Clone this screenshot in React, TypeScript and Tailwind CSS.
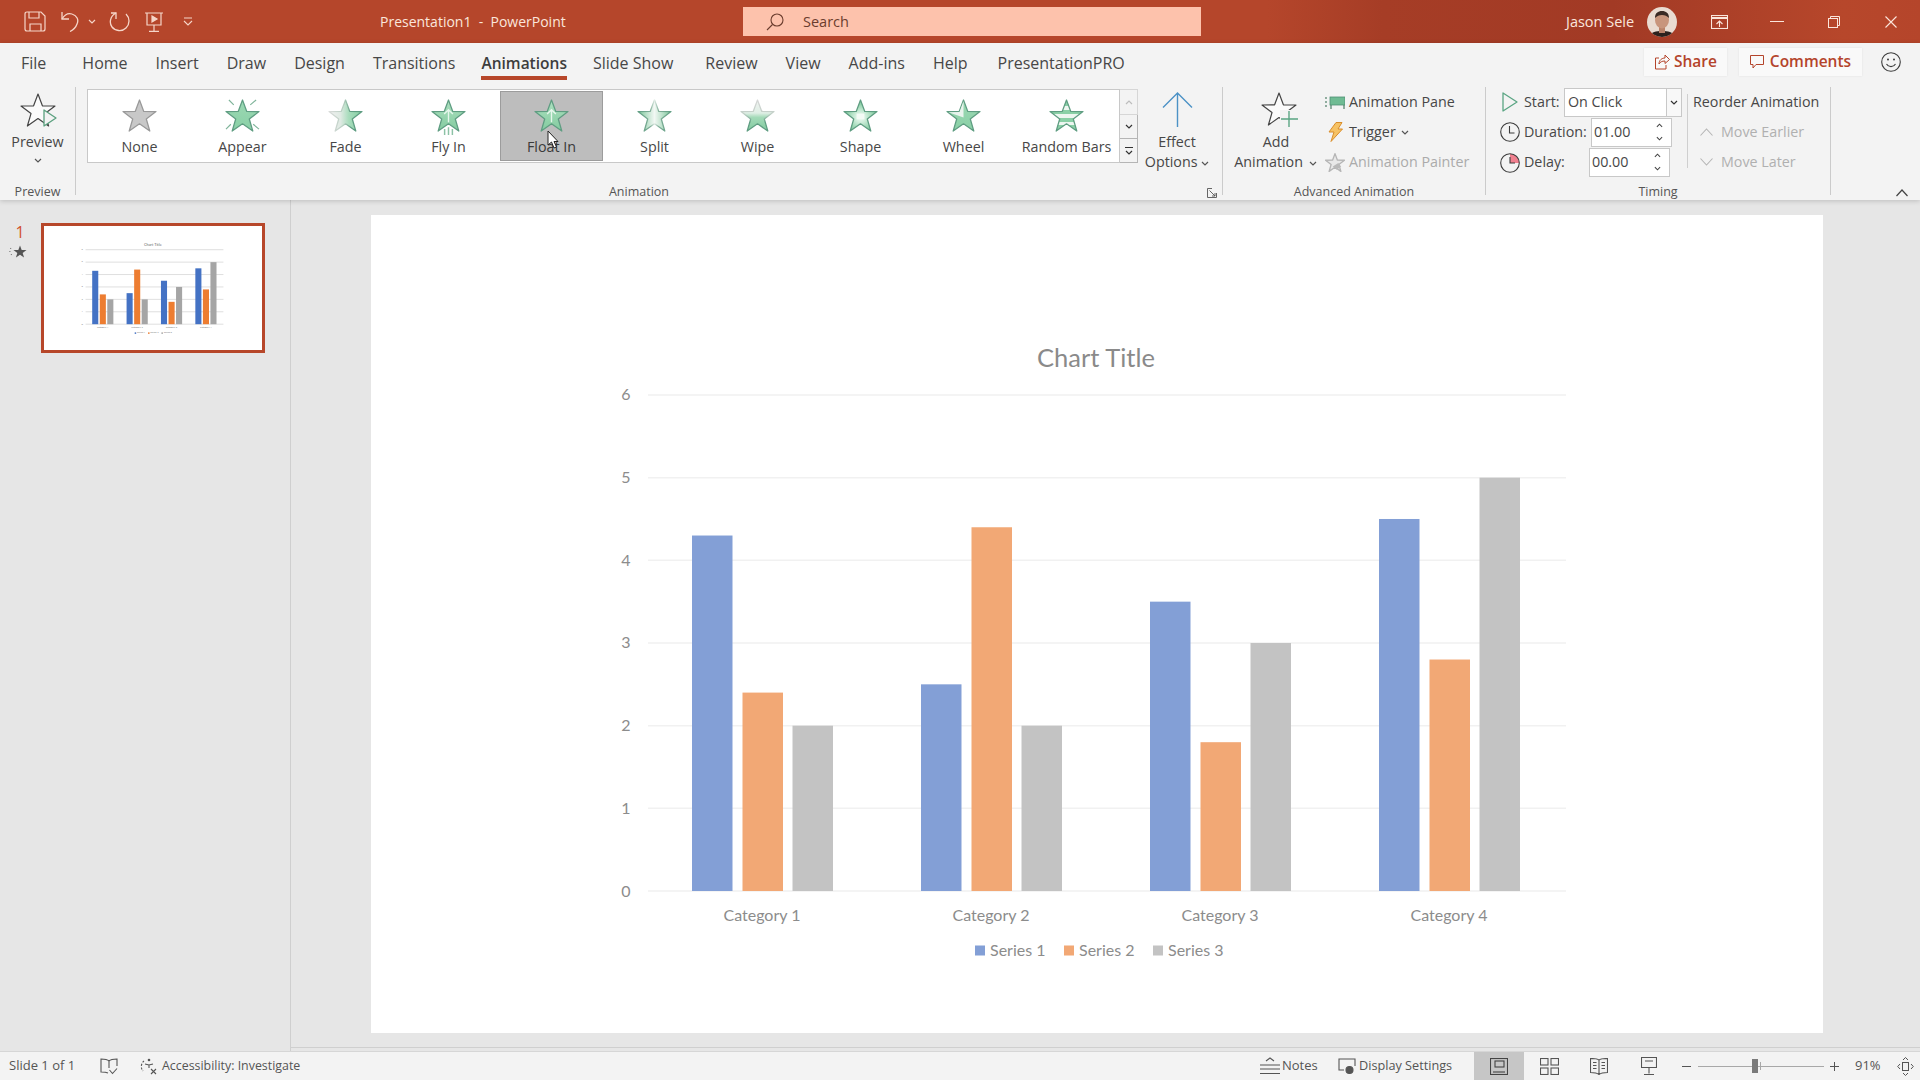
import type { ReactNode } from 'react';

const STAR = '18,1 22.4,12.8 35,13 25,20.6 28.6,33 18,25.6 7.4,33 11,20.6 1,13 13.6,12.8';

type Fx = 'none' | 'appear' | 'fade' | 'fly' | 'float' | 'split' | 'wipe' | 'shape' | 'wheel' | 'bars';

const effects: { label: string; fx: Fx }[] = [
  { label: 'None', fx: 'none' },
  { label: 'Appear', fx: 'appear' },
  { label: 'Fade', fx: 'fade' },
  { label: 'Fly In', fx: 'fly' },
  { label: 'Float In', fx: 'float' },
  { label: 'Split', fx: 'split' },
  { label: 'Wipe', fx: 'wipe' },
  { label: 'Shape', fx: 'shape' },
  { label: 'Wheel', fx: 'wheel' },
  { label: 'Random Bars', fx: 'bars' },
];

const tabs = ['Home', 'Insert', 'Draw', 'Design', 'Transitions', 'Animations', 'Slide Show', 'Review', 'View', 'Add-ins', 'Help', 'PresentationPRO'];

const series = [
  { name: 'Series 1', color: '#839fd6', thumb: '#4472c4', values: [4.3, 2.5, 3.5, 4.5], offset: 0 },
  { name: 'Series 2', color: '#f2a875', thumb: '#ed7d31', values: [2.4, 4.4, 1.8, 2.8], offset: 50.5 },
  { name: 'Series 3', color: '#c3c3c3', thumb: '#a5a5a5', values: [2, 2, 3, 5], offset: 100.5 },
];

function GalleryStar({ fx }: { fx: Fx }) {
  const id = `star-${fx}`;
  const stroke = fx === 'none' ? '#999999' : '#5f9d82';
  const fill = fx === 'none' ? '#c8c8c8' : `url(#${id})`;
  const hasEdge = fx === 'fade' || fx === 'split' || fx === 'wipe';
  return (
    <svg width="35" height="33" viewBox="0 0 36 34" className="overflow-visible">
      <defs>
        {(fx === 'appear' || fx === 'wheel') && (
          <linearGradient id={id} x1="0" y1="0" x2="0" y2="1">
            <stop offset="0" stopColor="#9bd8b3" />
            <stop offset="1" stopColor="#8ad0a6" />
          </linearGradient>
        )}
        {fx === 'fade' && (
          <linearGradient id={id} x1="0" y1="0" x2="1" y2="0">
            <stop offset="0" stopColor="#f0f0f0" />
            <stop offset="0.35" stopColor="#dfeae3" />
            <stop offset="0.6" stopColor="#a8dcbc" />
            <stop offset="1" stopColor="#84cea2" />
          </linearGradient>
        )}
        {(fx === 'fly' || fx === 'float') && (
          <linearGradient id={id} x1="0" y1="0" x2="0" y2="1">
            <stop offset="0" stopColor="#aee0c0" />
            <stop offset="1" stopColor="#82cb9f" />
          </linearGradient>
        )}
        {fx === 'split' && (
          <linearGradient id={id} x1="0" y1="0" x2="1" y2="0">
            <stop offset="0" stopColor="#7cc79a" />
            <stop offset="0.35" stopColor="#cfe9d9" />
            <stop offset="0.5" stopColor="#f2f8f4" />
            <stop offset="0.65" stopColor="#cfe9d9" />
            <stop offset="1" stopColor="#7cc79a" />
          </linearGradient>
        )}
        {fx === 'wipe' && (
          <linearGradient id={id} x1="0" y1="0" x2="0" y2="1">
            <stop offset="0" stopColor="#f0f4f1" />
            <stop offset="0.42" stopColor="#dfeee5" />
            <stop offset="0.56" stopColor="#a3dab8" />
            <stop offset="1" stopColor="#80ca9e" />
          </linearGradient>
        )}
        {fx === 'shape' && (
          <radialGradient id={id} cx="0.5" cy="0.55" r="0.5">
            <stop offset="0" stopColor="#f2faf5" />
            <stop offset="0.3" stopColor="#d3efde" />
            <stop offset="1" stopColor="#7ac99a" />
          </radialGradient>
        )}
        {fx === 'bars' && (
          <linearGradient id={id} x1="0" y1="0" x2="0" y2="1">
            <stop offset="0" stopColor="#8ad0a6" />
            <stop offset="0.2" stopColor="#8ad0a6" />
            <stop offset="0.2" stopColor="#edf6f0" />
            <stop offset="0.32" stopColor="#edf6f0" />
            <stop offset="0.32" stopColor="#8ad0a6" />
            <stop offset="0.46" stopColor="#8ad0a6" />
            <stop offset="0.46" stopColor="#edf6f0" />
            <stop offset="0.58" stopColor="#edf6f0" />
            <stop offset="0.58" stopColor="#8ad0a6" />
            <stop offset="0.72" stopColor="#8ad0a6" />
            <stop offset="0.72" stopColor="#edf6f0" />
            <stop offset="0.8" stopColor="#edf6f0" />
            <stop offset="0.8" stopColor="#8ad0a6" />
            <stop offset="1" stopColor="#8ad0a6" />
          </linearGradient>
        )}
        {hasEdge && (
          <linearGradient id={`edge-${fx}`} gradientUnits="userSpaceOnUse" x1={fx === 'wipe' ? 18 : 0} y1="0" x2={fx === 'wipe' ? 18 : 36} y2={fx === 'wipe' ? 34 : 0}>
            {fx === 'fade' && <stop offset="0" stopColor="#dcdcdc" />}
            {fx === 'fade' && <stop offset="0.45" stopColor="#b7cfc1" />}
            {fx === 'fade' && <stop offset="0.65" stopColor="#5f9d82" />}
            {fx === 'split' && <stop offset="0" stopColor="#5f9d82" />}
            {fx === 'split' && <stop offset="0.38" stopColor="#7fae98" />}
            {fx === 'split' && <stop offset="0.5" stopColor="#dde9e2" />}
            {fx === 'split' && <stop offset="0.62" stopColor="#7fae98" />}
            {fx === 'split' && <stop offset="1" stopColor="#5f9d82" />}
            {fx === 'wipe' && <stop offset="0" stopColor="#d8d8d8" />}
            {fx === 'wipe' && <stop offset="0.45" stopColor="#c2cfc7" />}
            {fx === 'wipe' && <stop offset="0.7" stopColor="#5f9d82" />}
          </linearGradient>
        )}
      </defs>
      <polygon points={STAR} fill={fill} stroke={hasEdge ? `url(#edge-${fx})` : stroke} strokeWidth="1.3" strokeLinejoin="round" />
      {fx === 'wheel' && <polygon points="18,19 18,2 13.9,13.4 2.500,13.6" fill="#e9f3ed" />}
      {fx === 'appear' && (
        <g stroke="#7fb49a" strokeWidth="1.2">
          <path d="M4 1l5 5M32 1l-6 5M1 31l5-5M35 31l-6-5" />
        </g>
      )}
      {(fx === 'fly' || fx === 'float') && (
        <path d="M18 24V11M13.500 15.500L18 11l4.500 4.500" fill="none" stroke="#e6f6ec" strokeWidth="1.4" />
      )}
      {fx === 'fly' && <path d="M14 31v6M18 29v8M22 31v6" stroke="#8cc2a6" strokeWidth="1.5" />}
      {fx === 'shape' && <rect x="14" y="15" width="8" height="6" fill="#f4fbf6" />}
    </svg>
  );
}

function OutlineStar({ children }: { children?: ReactNode }) {
  return (
    <svg width="37" height="34" viewBox="0 0 37 34" className="overflow-visible" fill="none">
      <polygon points={STAR} fill="#fbfbfb" stroke="#444444" strokeWidth="1.2" strokeLinejoin="round" />
      {children}
    </svg>
  );
}

function Chevron({ className = '', color = '#555555' }: { className?: string; color?: string }) {
  return (
    <svg width="8" height="5" viewBox="0 0 8 5" fill="none" className={className}>
      <path d="M1 1l3 3 3-3" stroke={color} strokeWidth="1.2" />
    </svg>
  );
}

function Spinner() {
  return (
    <div className="ml-auto mr-[8px] flex flex-col gap-[8px]">
      <svg width="7" height="5" viewBox="0 0 8 5" fill="none"><path d="M1 4l3-3 3 3" stroke="#444" strokeWidth="1.2" /></svg>
      <svg width="7" height="5" viewBox="0 0 8 5" fill="none"><path d="M1 1l3 3 3-3" stroke="#444" strokeWidth="1.2" /></svg>
    </div>
  );
}

function Chart({ thumb = false }: { thumb?: boolean }) {
  const gridColor = thumb ? '#d4d4d4' : '#f1f1f1';
  const gridWidth = thumb ? 5 : 1.5;
  const labelColor = thumb ? '#777777' : '#8c8c8c';
  return (
    <svg viewBox={thumb ? '371 241 1452 818' : '371 215 1452 818'} className="block h-full w-full [font-family:Lato,sans-serif]">
      <text x="1096" y="357" textAnchor="middle" dominantBaseline="central" fontSize="25.5" fill={thumb ? '#666' : '#8a8a8a'}>
        Chart Title
      </text>
      {[0, 1, 2, 3, 4, 5, 6].map((n) => (
        <g key={n}>
          <line x1="648" x2="1566" y1={891 - n * 82.67} y2={891 - n * 82.67} stroke={gridColor} strokeWidth={gridWidth} />
          <text x="626" y={890 - n * 82.67} textAnchor="middle" dominantBaseline="central" fontSize="16" fill={labelColor}>
            {n}
          </text>
        </g>
      ))}
      {series.map((s) =>
        s.values.map((v, i) => (
          <rect
            key={s.name + i}
            x={692 + i * 229 + s.offset}
            y={891 - v * 82.67}
            width="40.5"
            height={v * 82.67}
            fill={thumb ? s.thumb : s.color}
          />
        )),
      )}
      {[1, 2, 3, 4].map((c) => (
        <text key={c} x={762 + (c - 1) * 229} y="914.5" textAnchor="middle" dominantBaseline="central" fontSize="16" fill={labelColor}>
          {`Category ${c}`}
        </text>
      ))}
      {series.map((s, i) => (
        <g key={s.name}>
          <rect x={975 + i * 89} y="945.5" width="10" height="10" fill={thumb ? s.thumb : s.color} />
          <text x={990 + i * 89} y="949.5" dominantBaseline="central" fontSize="16" fill={labelColor}>
            {s.name}
          </text>
        </g>
      ))}
    </svg>
  );
}

export default function App() {
  return (
    <div className="flex h-screen w-screen flex-col overflow-hidden bg-[#e6e6e6] [font-family:'Open_Sans',sans-serif] text-[#474747]">
      {/* Title bar */}
      <header className="flex h-[43px] shrink-0 items-center bg-[linear-gradient(90deg,#b5462b_0%,#b5462b_66%,#a63d26_72%,#a23a25_84%,#ac4028_90%,#b7472b_96%,#b5452b_100%)] text-[14.5px] text-[#fbe6dc]">
        <svg width="22" height="21" viewBox="0 0 22 21" fill="none" stroke="#f6d6c9" strokeWidth="1.2" className="ml-[24px]">
          <path d="M1 3q0-2 2-2h14l4 4v13q0 2-2 2H3q-2 0-2-2z" />
          <path d="M5 1v6h10V1M6 20v-7h11v7" />
        </svg>
        <svg width="20" height="21" viewBox="0 0 20 21" fill="none" stroke="#f6d6c9" strokeWidth="1.3" className="ml-[15px]">
          <path d="M1 1v7h7" />
          <path d="M1 8c3-5 7-6 10-5 5 1.500 7 6 5 10-1 3-4 6-7 7.500" />
        </svg>
        <Chevron className="ml-[7px]" color="#f6d6c9" />
        <svg width="22" height="21" viewBox="0 0 22 21" fill="none" stroke="#f6d6c9" strokeWidth="1.3" className="ml-[13px]">
          <path d="M7 2C1 5 0 12 3 16c3 4 10 5 14 1 4-4 4-10 0-14" />
          <path d="M7 8V2H2" />
        </svg>
        <svg width="18" height="20" viewBox="0 0 18 20" fill="none" stroke="#f6d6c9" strokeWidth="1.2" className="ml-[14px]">
          <path d="M0 1h18M2 1v12h14V1M9 13v6M4 19.400h10" />
          <path d="M7 4l5 3-5 3z" fill="#f6d6c9" />
        </svg>
        <svg width="10" height="10" viewBox="0 0 10 10" fill="none" stroke="#f6d6c9" strokeWidth="1.1" className="ml-[20px]">
          <path d="M1 1h8M1 4l4 4 4-4" />
        </svg>
        <div className="ml-[187px] w-[363px] whitespace-pre text-[14px]">Presentation1  -  PowerPoint</div>
        <div className="flex h-[29px] w-[458px] items-center bg-[#fdc2ac] text-[#6b3d2e]">
          <svg width="18" height="18" viewBox="0 0 18 18" fill="none" stroke="#6b3d2e" strokeWidth="1.1" className="ml-[23px]">
            <circle cx="11" cy="7" r="6" />
            <path d="M6.500 11.500L1 17" />
          </svg>
          <span className="ml-[19px]">Search</span>
        </div>
        <div className="ml-[365px] w-[81px] whitespace-nowrap">Jason Sele</div>
        <svg width="30" height="30" viewBox="0 0 30 30" className="ml-[0px]">
          <defs>
            <clipPath id="avatar-clip"><circle cx="15" cy="15" r="15" /></clipPath>
          </defs>
          <g clipPath="url(#avatar-clip)">
            <rect width="30" height="30" fill="#e9dbd1" />
            <path d="M2 31c1-6 7-7 13-7s12 1 13 7z" fill="#2c211d" />
            <rect x="12" y="18" width="6" height="8" fill="#b98269" />
            <ellipse cx="15" cy="13" rx="7" ry="8.500" fill="#c8957c" />
            <path d="M8 11c0-5 3-7 7-7s7 2 7 7c-2-2-4-3-7-3s-5 1-7 3z" fill="#3a2a24" />
          </g>
        </svg>
        <svg width="17" height="14" viewBox="0 0 17 14" fill="none" stroke="#fbe6dc" strokeWidth="1.1" className="ml-[34px]">
          <rect x="0.500" y="0.500" width="16" height="13" />
          <path d="M0.500 3h16" strokeWidth="2" />
          <path d="M8.500 12V6M5.500 9l3-3 3 3" />
        </svg>
        <div className="ml-[42px] h-px w-[14px] bg-[#fbe6dc]" />
        <svg width="12" height="12" viewBox="0 0 12 12" fill="none" stroke="#fbe6dc" strokeWidth="1" className="ml-[44px]">
          <rect x="0.500" y="2.500" width="9" height="9" />
          <path d="M2.500 2.500v-2h9v9h-2" />
        </svg>
        <svg width="12" height="12" viewBox="0 0 12 12" fill="none" stroke="#fbe6dc" strokeWidth="1.1" className="ml-[45px]">
          <path d="M0.500 0.500l11 11M11.500 0.500l-11 11" />
        </svg>
      </header>

      {/* Tabs */}
      <div className="relative z-10 flex h-[157px] shrink-0 flex-col bg-[#f3f3f3] shadow-[0_1px_5px_rgba(0,0,0,0.18)]">
        <nav className="flex h-[44px] shrink-0 items-start text-[16px]">
          <a className="ml-[21px] h-[37px] pt-[9px] leading-[22px]">File</a>
          <div className="ml-[36px] flex items-start">
            {tabs.map((t) => (
              <a
                key={t}
                className={
                  t === 'Animations'
                    ? 'mr-[26px] h-[37px] border-b-4 border-[#b7472a] pt-[9px] text-[15.500px] font-semibold leading-[22px] text-[#3d3d3d]'
                    : t === 'Transitions'
                      ? 'mr-[26px] h-[37px] whitespace-nowrap pt-[9px] leading-[22px]'
                      : t === 'Slide Show'
                        ? 'mr-[32px] h-[37px] whitespace-nowrap pt-[9px] leading-[22px]'
                        : t === 'Help'
                          ? 'mr-[30px] h-[37px] whitespace-nowrap pt-[9px] leading-[22px]'
                          : 'mr-[28px] h-[37px] whitespace-nowrap pt-[9px] leading-[22px]'
                }
              >
                {t}
              </a>
            ))}
          </div>
          <div className="ml-auto mr-[19px] mt-[5px] flex items-center text-[15.500px] font-semibold text-[#b4442b]">
            <div className="flex h-[28px] w-[83px] items-center justify-center gap-[4px] bg-[#f9f9f9] shadow-[0_0_2px_rgba(0,0,0,0.08)]">
              <svg width="16" height="16" viewBox="0 0 16 16" fill="none" stroke="#b4442b" strokeWidth="1">
                <path d="M5 4H1.500v11H12v-4" />
                <path d="M5 10c0-4 3-6 6-6V1l4.500 4.500L11 9.500V7c-3 0-5 1-6 3z" />
              </svg>
              Share
            </div>
            <div className="ml-[12px] flex h-[28px] w-[123px] items-center justify-center gap-[6px] bg-[#f9f9f9] shadow-[0_0_2px_rgba(0,0,0,0.08)]">
              <svg width="14" height="14" viewBox="0 0 14 14" fill="none" stroke="#b4442b" strokeWidth="1">
                <path d="M0.500 0.500h13v9H6L3 13V9.500H0.500z" />
              </svg>
              Comments
            </div>
            <svg width="20" height="20" viewBox="0 0 20 20" fill="none" stroke="#3c3c3c" strokeWidth="1.1" className="ml-[19px]">
              <circle cx="10" cy="10" r="9.300" />
              <circle cx="7" cy="7.500" r="1" fill="#3c3c3c" stroke="none" />
              <circle cx="13" cy="7.500" r="1" fill="#3c3c3c" stroke="none" />
              <path d="M5.500 12c2 3.500 7 3.500 9 0" />
            </svg>
          </div>
        </nav>

        {/* Ribbon groups */}
        <div className="flex flex-1 text-[14.300px]">
          {/* Preview */}
          <section className="flex w-[75px] flex-col">
            <div className="flex h-[96px] flex-col items-center pt-[6px]">
              <div className="ml-[1px]">
                <OutlineStar>
                  <path d="M24 17l12 8-12 8z" fill="#f3f3f3" stroke="#5aa07e" strokeWidth="1.3" strokeLinejoin="round" />
                </OutlineStar>
              </div>
              <div className="mt-[5px] leading-[20px]">Preview</div>
              <Chevron className="mt-[6px]" />
            </div>
            <div className="text-center text-[12.500px] leading-[18px] text-[#555]">Preview</div>
          </section>
          <div className="h-[108px] w-px bg-[#cbcbcb]" />

          {/* Animation */}
          <section className="flex w-[1146px] flex-col">
            <div className="flex h-[96px]">
              <div className="ml-[11px] mt-[2px] flex h-[74px] w-[1033px] border border-[#c8c8c8] bg-white">
                <div className="flex h-[72px] items-start pt-px">
                  {effects.map((e) => (
                    <div
                      key={e.label}
                      className={
                        e.fx === 'float'
                          ? 'flex h-[70px] w-[103px] flex-col items-center border border-[#9c9c9c] bg-[#bdbdbd] pt-[7px] text-[#3a3a3a]'
                          : 'flex h-[70px] w-[103px] flex-col items-center border border-transparent pt-[7px]'
                      }
                    >
                      <GalleryStar fx={e.fx} />
                      <div className="mt-[5px] whitespace-nowrap leading-[20px]">{e.label}</div>
                    </div>
                  ))}
                </div>
              </div>
              <div className="mt-[2px] flex h-[74px] w-[18px] flex-col">
                <div className="flex h-[26px] items-center justify-center border border-l-0 border-[#d6d6d6]">
                  <svg width="8" height="5" viewBox="0 0 8 5" fill="none"><path d="M1 4l3-3 3 3" stroke="#bdbdbd" strokeWidth="1.2" /></svg>
                </div>
                <div className="flex h-[24px] items-center justify-center border border-l-0 border-t-0 border-[#b5b5b5]">
                  <Chevron color="#333" />
                </div>
                <div className="flex h-[24px] flex-col items-center justify-center gap-[2px] border border-l-0 border-t-0 border-[#b5b5b5]">
                  <div className="h-px w-[8px] bg-[#333]" />
                  <Chevron color="#333" />
                </div>
              </div>
              <div className="flex w-[78px] flex-col items-center pl-[0px] pt-[5px]">
                <svg width="31" height="35" viewBox="0 0 31 35" fill="none" stroke="#4c92c6" strokeWidth="1.4">
                  <path d="M15.500 35V1M1 15.500L15.500 1 30 15.500" />
                </svg>
                <div className="mt-[5px] leading-[20px]">Effect</div>
                <div className="whitespace-nowrap leading-[20px]">
                  Options <Chevron className="inline align-middle" />
                </div>
              </div>
            </div>
            <div className="flex items-center">
              <div className="flex-1 pr-[5px] text-center text-[12.500px] leading-[18px] text-[#555]">Animation</div>
              <svg width="10" height="10" viewBox="0 0 10 10" fill="none" stroke="#555" strokeWidth="0.9" className="mr-[5px] mt-[1px]">
                <path d="M9.500 5v4.500H0.500V0.500H5M2.500 2.500L8 8M8 5v3H5" />
              </svg>
            </div>
          </section>
          <div className="h-[108px] w-px bg-[#cbcbcb]" />

          {/* Advanced Animation */}
          <section className="flex w-[262px] flex-col">
            <div className="flex h-[96px]">
              <div className="flex w-[99px] flex-col items-center pt-[5px]">
                <div className="ml-[14px]">
                  <OutlineStar>
                    <rect x="19" y="18" width="18" height="17" fill="#f3f3f3" />
                    <path d="M28 19v16M20 27h17" stroke="#5aa583" strokeWidth="1.4" />
                  </OutlineStar>
                </div>
                <div className="ml-[7px] mt-[6px] leading-[20px]">Add</div>
                <div className="whitespace-nowrap pl-[6px] leading-[20px]">
                  Animation <Chevron className="ml-[2px] inline align-middle" />
                </div>
              </div>
              <div className="flex flex-col">
                <div className="flex h-[30px] items-center">
                  <svg width="20" height="15" viewBox="0 0 20 15" fill="none" className="ml-[3px]">
                    <rect x="5" y="2" width="15" height="8" fill="#6fbb93" stroke="#4f8f74" strokeWidth="0.8" />
                    <path d="M1 2v2M1 6v2M1 10v2M6 10v4M19 10v4" stroke="#4f7f68" strokeWidth="1.2" />
                  </svg>
                  <span className="ml-[4px] whitespace-nowrap">Animation Pane</span>
                </div>
                <div className="flex h-[30px] items-center">
                  <svg width="15" height="20" viewBox="0 0 15 20" className="ml-[6px]">
                    <path d="M8 0.500h6L10 7h4.500L3 19.500 6 10H1z" fill="#f6c264" stroke="#d98d2b" strokeWidth="1" strokeLinejoin="round" />
                  </svg>
                  <span className="ml-[6px]">Trigger</span>
                  <Chevron className="ml-[5px]" />
                </div>
                <div className="flex h-[30px] items-center text-[#ababab]">
                  <svg width="20" height="19" viewBox="0 0 36 34" className="ml-[3px]">
                    <polygon points={STAR} fill="#e8e8e8" stroke="#b5b5b5" strokeWidth="2.4" strokeLinejoin="round" />
                    <path d="M14 24l10-6 5 6-8 6z" fill="#b9b9b9" />
                  </svg>
                  <span className="ml-[4px] whitespace-nowrap">Animation Painter</span>
                </div>
              </div>
            </div>
            <div className="text-center text-[12.500px] leading-[18px] text-[#555]">Advanced Animation</div>
          </section>
          <div className="h-[108px] w-px bg-[#cbcbcb]" />

          {/* Timing */}
          <section className="flex w-[344px] flex-col">
            <div className="flex h-[96px]">
              <div className="flex w-[196px] flex-col">
                <div className="flex h-[30px] items-center pl-[16px]">
                  <svg width="16" height="20" viewBox="0 0 16 20" fill="none" stroke="#5aa583" strokeWidth="1.3">
                    <path d="M1 1l14 9-14 9z" strokeLinejoin="round" />
                  </svg>
                  <span className="ml-[6px] w-[40px]">Start:</span>
                  <div className="flex h-[29px] w-[118px] items-center border border-[#c8c8c8] bg-white pl-[3px]">
                    <span className="w-[98px]">On Click</span>
                    <div className="flex h-full flex-1 items-center justify-center border-l border-[#c8c8c8] bg-[#f8f8f8]">
                      <Chevron color="#333" />
                    </div>
                  </div>
                </div>
                <div className="flex h-[30px] items-center pl-[14px]">
                  <svg width="20" height="20" viewBox="0 0 20 20" fill="none" stroke="#3c3c3c" strokeWidth="1.1">
                    <circle cx="10" cy="10" r="9.300" />
                    <path d="M9.500 4v7h5" />
                  </svg>
                  <span className="ml-[4px] w-[67px]">Duration:</span>
                  <div className="flex h-[29px] w-[81px] items-center border border-[#c8c8c8] bg-white pl-[2px]">
                    01.00
                    <Spinner />
                  </div>
                </div>
                <div className="flex h-[30px] items-center pl-[14px]">
                  <svg width="20" height="21" viewBox="0 0 20 21" fill="none" stroke="#3c3c3c" strokeWidth="1.1">
                    <path d="M10 1.700a9.300 9.300 0 0 1 9.300 9.300H10z" fill="#f0808f" stroke="none" />
                    <circle cx="10" cy="11" r="9.300" />
                    <path d="M10 5v6h5" />
                  </svg>
                  <span className="ml-[4px] w-[65px]">Delay:</span>
                  <div className="flex h-[29px] w-[81px] items-center border border-[#c8c8c8] bg-white pl-[2px]">
                    00.00
                    <Spinner />
                  </div>
                </div>
              </div>
              <div className="ml-[5px] mt-[7px] h-[74px] w-px bg-[#cfcfcf]" />
              <div className="ml-[5px] flex flex-col">
                <div className="flex h-[30px] items-center whitespace-nowrap">Reorder Animation</div>
                <div className="flex h-[30px] items-center pl-[7px] text-[#b0b0b0]">
                  <svg width="13" height="8" viewBox="0 0 13 8" fill="none" stroke="#b5b5b5" strokeWidth="1.1"><path d="M0.500 7.500l6-6.500 6 6.500" /></svg>
                  <span className="ml-[8px] whitespace-nowrap">Move Earlier</span>
                </div>
                <div className="flex h-[30px] items-center pl-[7px] text-[#b0b0b0]">
                  <svg width="13" height="8" viewBox="0 0 13 8" fill="none" stroke="#b5b5b5" strokeWidth="1.1"><path d="M0.500 0.500l6 6.500 6-6.500" /></svg>
                  <span className="ml-[8px] whitespace-nowrap">Move Later</span>
                </div>
              </div>
            </div>
            <div className="text-center text-[12.500px] leading-[18px] text-[#555]">Timing</div>
          </section>
          <div className="h-[108px] w-px bg-[#cbcbcb]" />
          <svg width="12" height="8" viewBox="0 0 12 8" fill="none" stroke="#444" strokeWidth="1.2" className="ml-[65px] mt-[102px]">
            <path d="M0.500 7l5.500-6 5.500 6" />
          </svg>
        </div>
      </div>

      {/* Workspace */}
      <div className="flex min-h-0 flex-1">
        <aside className="flex w-[291px] shrink-0 border-r border-[#cfcfcf] pt-[23px]">
          <div className="flex w-[40px] flex-col items-center">
            <div className="text-[16px] leading-[18px] text-[#d2502d]">1</div>
            <svg width="14" height="13" viewBox="0 0 36 34" className="mt-[4px] overflow-visible">
              <polygon points={STAR} fill="#555555" />
              <path d="M-8 9h5M-10 17h5M-6 25h4" stroke="#777" strokeWidth="2.500" strokeDasharray="3 2" />
            </svg>
          </div>
          <div className="ml-px h-[130px] w-[224px] border-[3px] border-[#b7472a] bg-white">
            <Chart thumb />
          </div>
        </aside>
        <main className="flex-1">
          <div className="h-[848px] border-b border-[#cfcfcf] pl-[80px] pt-[15px]">
            <div className="h-[818px] w-[1452px] bg-white">
              <Chart />
            </div>
          </div>
        </main>
      </div>

      {/* Status bar */}
      <footer className="flex h-[29px] shrink-0 items-center border-t border-[#d6d6d6] bg-[#f3f3f3] text-[13px] text-[#555]">
        <span className="ml-[9px] w-[91px] whitespace-nowrap">Slide 1 of 1</span>
        <svg width="18" height="17" viewBox="0 0 18 17" fill="none" stroke="#555" strokeWidth="1.1">
          <path d="M9 3C7 1 4 1 1 1v13c3 0 5 0 7 1M9 3c2-2 5-2 8-2v7M9 3v7" />
          <path d="M9.500 12l3 3.500 4.500-5" />
        </svg>
        <svg width="17" height="17" viewBox="0 0 17 17" fill="none" stroke="#555" strokeWidth="1.1" className="ml-[22px]">
          <path d="M4 3a7 7 0 0 0-1 10" strokeDasharray="2 1.500" />
          <circle cx="9" cy="2" r="1.300" fill="#555" stroke="none" />
          <path d="M5 6l4 1 4-1M9 7v3M11 11l5 5M16 11l-5 5" />
        </svg>
        <span className="ml-[5px] w-[1098px] whitespace-nowrap text-[12.400px]">Accessibility: Investigate</span>
        <svg width="20" height="18" viewBox="0 0 20 18" fill="none" stroke="#555" strokeWidth="1.1">
          <path d="M6 4l4-3 4 3M0 8h20M0 12h20M0 16.500h20" />
        </svg>
        <span className="ml-[2px] w-[56px]">Notes</span>
        <svg width="18" height="17" viewBox="0 0 18 17" fill="none" stroke="#555" strokeWidth="1.1">
          <path d="M6 12H1V1h16v7" />
          <circle cx="11.500" cy="12" r="3.500" fill="#555" />
        </svg>
        <span className="ml-[3px] w-[115px] whitespace-nowrap text-[12.700px]">Display Settings</span>
        <div className="flex h-full w-[50px] items-center justify-center bg-[#c6c6c6]">
          <svg width="18" height="17" viewBox="0 0 18 17" fill="none" stroke="#444" strokeWidth="1.1">
            <rect x="0.500" y="0.500" width="17" height="16" />
            <rect x="5" y="3" width="9" height="6" />
            <path d="M3 14h12" />
          </svg>
        </div>
        <svg width="19" height="17" viewBox="0 0 19 17" fill="none" stroke="#555" strokeWidth="1.1" className="ml-[16px]">
          <rect x="0.500" y="0.500" width="7.500" height="6.500" />
          <rect x="11" y="0.500" width="7.500" height="6.500" />
          <rect x="0.500" y="10" width="7.500" height="6.500" />
          <rect x="11" y="10" width="7.500" height="6.500" />
        </svg>
        <svg width="18" height="17" viewBox="0 0 18 17" fill="none" stroke="#555" strokeWidth="1.1" className="ml-[31px]">
          <path d="M9 2C7 0.500 4 0.500 0.500 0.500v14c4 0 6 0 8.500 2 2.500-2 4.500-2 8.500-2V0.500C14 0.500 11 0.500 9 2zM9 2v14.500M3 4.500h3.500M3 7.500h3.500M3 10.500h3.500M11.500 4.500H15M11.500 7.500H15M11.500 10.500H15" />
        </svg>
        <svg width="16" height="18" viewBox="0 0 16 18" fill="none" stroke="#555" strokeWidth="1.1" className="ml-[33px]">
          <path d="M0.500 0.500h15v10h-15zM8 10.500v6M3 17.500h10M4 4h8" />
        </svg>
        <div className="ml-[25px] h-px w-[9px] bg-[#555]" />
        <div className="relative ml-[7px] flex h-[14px] w-[126px] items-center">
          <div className="h-px w-full bg-[#a8a8a8]" />
          <div className="absolute left-[54px] top-0 h-[14px] w-[6px] bg-[#7a7a7a]" />
          <div className="absolute left-[62px] top-[3px] h-[8px] w-px bg-[#a8a8a8]" />
        </div>
        <svg width="9" height="9" viewBox="0 0 9 9" stroke="#555" strokeWidth="1" className="ml-[6px]">
          <path d="M0 4.500h9M4.500 0v9" />
        </svg>
        <span className="ml-[16px] w-[42px]">91%</span>
        <svg width="17" height="19" viewBox="0 0 17 19" fill="none" stroke="#555" strokeWidth="1">
          <rect x="5.500" y="5.500" width="6" height="8" />
          <path d="M6 3l2.500-2.500L11 3M6 16l2.500 2.500L11 16M3 7L0.700 9.500 3 12M14 7l2.300 2.500L14 12" />
        </svg>
      </footer>

      {/* Mouse pointer over the Float In tile */}
      <svg width="12" height="19" viewBox="0 0 12 19" className="absolute left-[547px] top-[130px] z-20">
        <path d="M1 1v14l3.500-3 2.500 6 2.500-1-2.500-5.500H11z" fill="#ffffff" stroke="#222222" strokeWidth="1" strokeLinejoin="round" />
      </svg>
    </div>
  );
}
